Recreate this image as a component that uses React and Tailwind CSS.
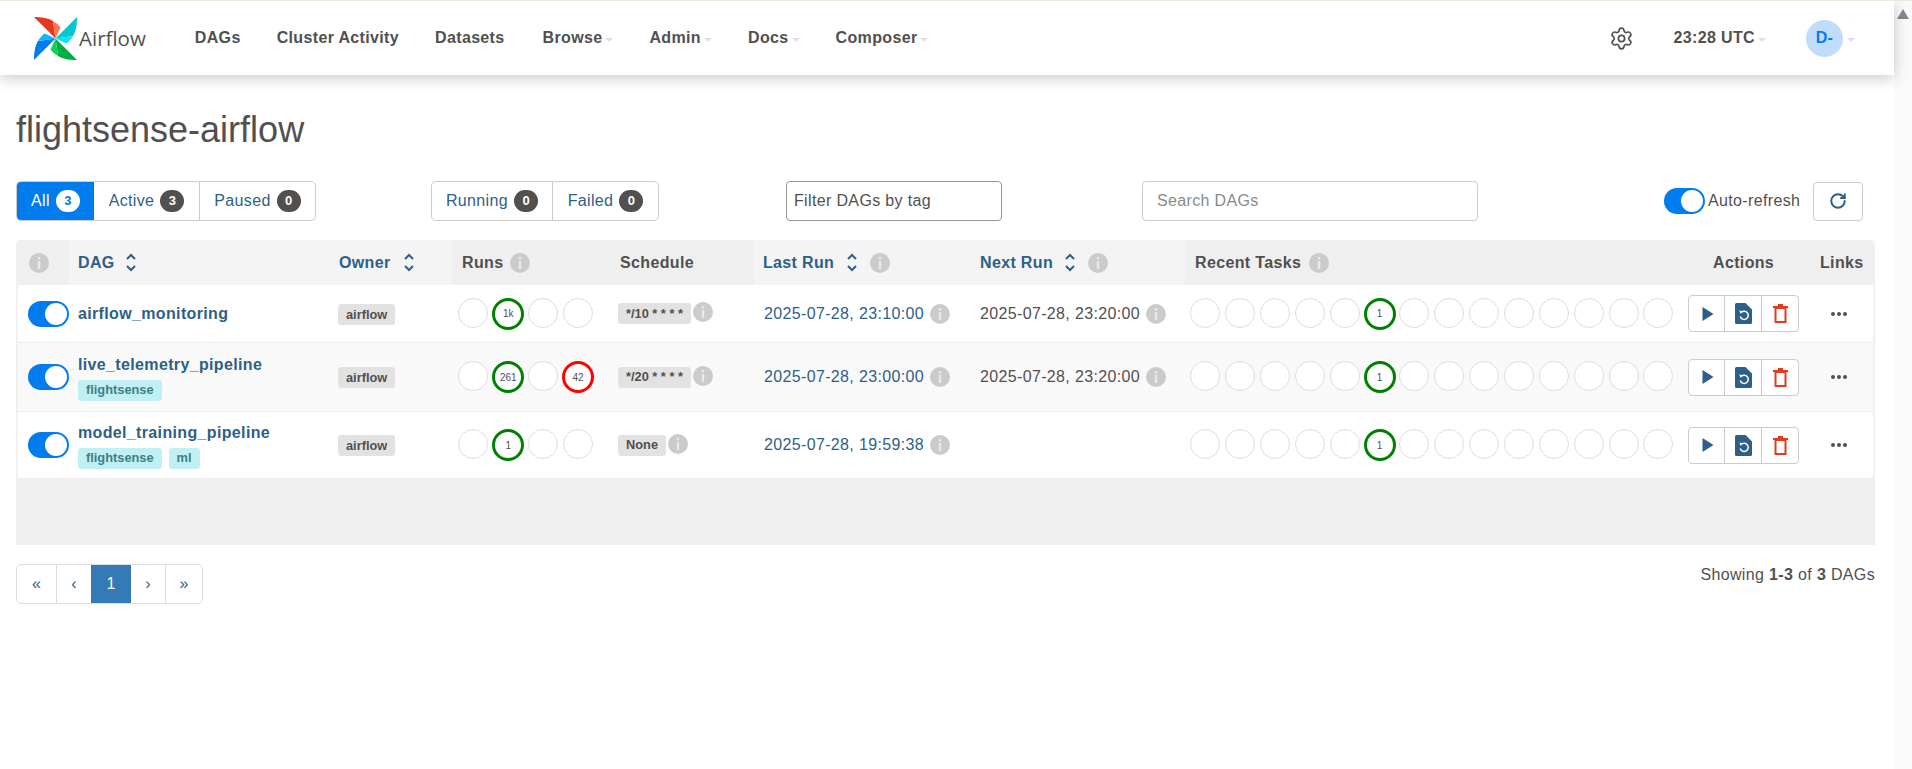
import { RotateCw, Settings } from 'lucide-react'

const LINK = 'text-[#2d5f88]'
const CELLS = 'grid grid-cols-[51px_261px_122px_158px_144px_216px_215px_495px_131px_62px]'

function Logo() {
  const blades = [
    ['#e43921', '#ff7557', 0],
    ['#00c7d4', '#11e1ee', 90],
    ['#00ad46', '#04d659', 180],
    ['#017cee', '#0cb6ff', 270],
  ]
  return (
    <svg width="43" height="43" viewBox="0 0 43 43">
      {blades.map(([dark, light, angle]) => (
        <g key={angle} transform={`rotate(${angle} 21.5 21.5)`}>
          <path d="M0 0C8 0 14 1 19 4L21.5 21.5Z" fill={dark} />
          <path d="M19 4C22 6 25 8 26.500 10.500L21.500 21.500Z" fill={light} />
        </g>
      ))}
    </svg>
  )
}

function Caret() {
  return <span className="ml-[3px] mt-[3px] inline-block h-0 w-0 border-x-4 border-t-4 border-x-transparent border-t-[#e6d9e8]" />
}

function NavItem({ label, caret, className = '' }) {
  return (
    <a className={`flex items-center px-[18px] ${className}`}>
      {label}
      {caret && <Caret />}
    </a>
  )
}

function Navbar() {
  return (
    <nav className="relative z-10 flex h-[74px] items-center bg-white pl-[34px] pr-[39px] font-bold text-[#51504f] shadow-[0_3px_14px_rgba(0,0,0,0.22)]">
      <div className="flex items-center">
        <Logo />
        <span className="ml-[2px] font-['Open_Sans'] text-[20.5px] font-normal tracking-normal">Airflow</span>
      </div>
      <div className="ml-[31px] flex items-center">
        <NavItem label="DAGs" />
        <NavItem label="Cluster Activity" />
        <NavItem label="Datasets" />
        <NavItem label="Browse" caret className="ml-[2px]" />
        <NavItem label="Admin" caret />
        <NavItem label="Docs" caret />
        <NavItem label="Composer" caret />
      </div>
      <div className="ml-auto flex items-center">
        <Settings size={25} strokeWidth={1.6} />
        <span className="ml-[40px] flex items-center">23:28 UTC<Caret /></span>
        <span className="ml-[40px] flex h-[37px] w-[37px] items-center justify-center rounded-full bg-[#bfdcfb] text-[#017cee]">D-</span>
        <span className="ml-[1px] flex"><Caret /></span>
      </div>
    </nav>
  )
}

function Badge({ value, active }) {
  return (
    <span className={`ml-[6px] flex h-[22px] w-[24px] items-center justify-center rounded-full text-[13px] font-bold tracking-normal ${active ? 'bg-white text-[#017cee]' : 'bg-[#51504f] text-white'}`}>
      {value}
    </span>
  )
}

function FilterButton({ label, value, active, className }) {
  return (
    <a className={`flex h-full items-center ${className} ${active ? 'bg-[#017cee] text-white' : LINK}`}>
      {label}
      <Badge value={value} active={active} />
    </a>
  )
}

function Toggle() {
  return (
    <span className="flex h-[26px] w-[41px] items-center justify-end rounded-full bg-[#017cee] pr-[2px]">
      <span className="h-[22px] w-[22px] rounded-full bg-white" />
    </span>
  )
}

function FilterBar() {
  return (
    <div className="mt-[28px] flex h-[40px] items-center">
      <div className="flex h-full w-[300px] overflow-hidden rounded-[5px] border border-[#ccc]">
        <FilterButton label="All" value="3" active className="w-[77px] justify-center" />
        <FilterButton label="Active" value="3" className="w-[106px] justify-center border-r border-[#ccc]" />
        <FilterButton label="Paused" value="0" className="flex-1 justify-center" />
      </div>
      <div className="ml-[115px] flex h-full w-[228px] overflow-hidden rounded-[5px] border border-[#ccc]">
        <FilterButton label="Running" value="0" className="w-[121px] justify-center border-r border-[#ccc]" />
        <FilterButton label="Failed" value="0" className="flex-1 justify-center" />
      </div>
      <div className="ml-[127px] flex h-full w-[216px] items-center rounded-[4px] border border-[#999] pl-[7px] text-[#51504f]">Filter DAGs by tag</div>
      <div className="ml-[140px] flex h-full w-[336px] items-center rounded-[4px] border border-[#ccc] pl-[14px] text-[#8a8a8a]">Search DAGs</div>
      <div className="ml-[186px]"><Toggle /></div>
      <span className="ml-[3px] text-[#51504f]">Auto-refresh</span>
      <button className={`ml-[13px] flex h-[39px] w-[50px] items-center justify-center rounded-[4px] border border-[#ccc] ${LINK}`}>
        <RotateCw size={18} strokeWidth={2.6} />
      </button>
    </div>
  )
}

function Info({ className = '' }) {
  return (
    <svg width="20" height="20" viewBox="0 0 20 20" className={`shrink-0 ${className}`}>
      <circle cx="10" cy="10" r="10" fill="#cbcbcb" />
      <rect x="8.8" y="4" width="2.400" height="2.400" fill="#e9e9e9" />
      <rect x="8.8" y="8" width="2.400" height="8" fill="#e9e9e9" />
    </svg>
  )
}

function Sort({ className = '' }) {
  return (
    <svg width="12" height="19" viewBox="0 0 12 19" className={`shrink-0 ${className}`} fill="none" stroke="#2d5f88" strokeWidth="2">
      <path d="M2 6l4-4 4 4" />
      <path d="M2 13l4 4 4-4" />
    </svg>
  )
}

function HeaderCell({ children, light, className = '' }) {
  return (
    <div className={`flex items-center ${light ? `bg-[#f4f4f4] ${LINK}` : 'bg-[#efefef] text-[#51504f]'} ${className}`}>
      {children}
    </div>
  )
}

function TableHeader() {
  return (
    <div className={`${CELLS} h-[45px] font-bold`}>
      <HeaderCell className="pl-[11px]"><Info /></HeaderCell>
      <HeaderCell light className="pl-[9px]">DAG<Sort className="ml-[10px]" /></HeaderCell>
      <HeaderCell light className="pl-[9px]">Owner<Sort className="ml-[12px]" /></HeaderCell>
      <HeaderCell className="pl-[10px]">Runs<Info className="ml-[7px]" /></HeaderCell>
      <HeaderCell className="pl-[10px]">Schedule</HeaderCell>
      <HeaderCell light className="pl-[9px]">Last Run<Sort className="ml-[12px]" /><Info className="ml-[12px]" /></HeaderCell>
      <HeaderCell light className="pl-[10px]">Next Run<Sort className="ml-[11px]" /><Info className="ml-[12px]" /></HeaderCell>
      <HeaderCell className="pl-[10px]">Recent Tasks<Info className="ml-[8px]" /></HeaderCell>
      <HeaderCell className="pl-[33px]">Actions</HeaderCell>
      <HeaderCell className="pl-[9px]">Links</HeaderCell>
    </div>
  )
}

function Circle({ value, color }) {
  return (
    <span className="flex w-[34.85px] shrink-0 justify-center">
      {value ? (
        <span className={`flex h-[32px] w-[32px] items-center justify-center rounded-full border-[3px] bg-white text-[10px] tracking-normal text-[#51504f] ${color}`}>{value}</span>
      ) : (
        <span className="h-[30px] w-[30px] rounded-full border-[1.5px] border-[#dedede] bg-white" />
      )}
    </span>
  )
}

function Label({ children, className = '' }) {
  return (
    <span className={`flex h-[21px] items-center rounded-[3px] px-[8px] text-[12.8px] font-bold tracking-normal ${className}`}>{children}</span>
  )
}

function Actions() {
  return (
    <div className="flex h-[37px] w-[111px] rounded-[4px] border border-[#ccc] bg-white">
      <span className="flex w-[36px] items-center justify-center border-r border-[#ccc] pl-[2px]">
        <svg width="12" height="14" viewBox="0 0 12 14"><path d="M0.500 0L11.500 7L0.500 14Z" fill="#2d5f88" /></svg>
      </span>
      <span className="flex w-[37px] items-center justify-center border-r border-[#ccc]">
        <svg width="17" height="21" viewBox="0 0 17 21">
          <path d="M1.500 0H10.500L17 6.500V19.500A1.500 1.500 0 0 1 15.500 21H1.500A1.500 1.500 0 0 1 0 19.500V1.500A1.500 1.500 0 0 1 1.500 0Z" fill="#2d5f88" />
          <path d="M6.400 9.300A4.100 4.100 0 1 1 5.200 13.500" fill="none" stroke="#fff" strokeWidth="1.500" />
          <path d="M4.300 7.600L7.800 8.200L5.700 11.100Z" fill="#fff" />
        </svg>
      </span>
      <span className="flex flex-1 items-center justify-center">
        <svg width="15" height="19" viewBox="0 0 15 19" fill="none" stroke="#e43921" strokeWidth="2">
          <path d="M0 3H15" />
          <path d="M5 1H10" />
          <rect x="2.500" y="4" width="10" height="14" />
        </svg>
      </span>
    </div>
  )
}

function DagRow({ name, tags, schedule, lastRun, nextRun, runs, height, striped }) {
  return (
    <div className={`${CELLS} ${height} items-center border-b border-[#eee] ${striped ? 'bg-[#f9f9f9]' : 'bg-white'}`}>
      <div className="pl-[10px]"><Toggle /></div>
      <div className="pl-[9px]">
        <a className={`block leading-[22px] font-bold ${LINK}`}>{name}</a>
        {tags && (
          <div className="mt-[4px] flex gap-[7px]">
            {tags.map((tag) => <Label key={tag} className="bg-[#c0f0f4] text-[#3f7f86]">{tag}</Label>)}
          </div>
        )}
      </div>
      <div className="pl-[8px]"><span className="inline-flex"><Label className="bg-[#e2e2e2] text-[#51504f]">airflow</Label></span></div>
      <div className="flex pl-[4px]">
        {runs.map((run, i) => <Circle key={i} value={run?.value} color={run?.color} />)}
      </div>
      <div className="flex items-center pl-[8px]">
        <Label className="bg-[#e2e2e2] text-[#51504f]">{schedule}</Label>
        <Info className="ml-[2px] -mt-[3px]" />
      </div>
      <div className={`flex items-center pl-[10px] ${LINK}`}>{lastRun}<Info className="ml-[6px]" /></div>
      <div className="flex items-center pl-[10px] text-[#51504f]">
        {nextRun}
        {nextRun && <Info className="ml-[6px]" />}
      </div>
      <div className="flex pl-[3px]">
        {Array.from({ length: 14 }, (_, i) => (
          <Circle key={i} value={i === 5 ? '1' : null} color="border-[#008000]" />
        ))}
      </div>
      <div className="pl-[8px]"><Actions /></div>
      <div className="flex justify-center gap-[2px] pr-[7px]">
        <span className="h-[4px] w-[4px] rounded-full bg-[#51504f]" />
        <span className="h-[4px] w-[4px] rounded-full bg-[#51504f]" />
        <span className="h-[4px] w-[4px] rounded-full bg-[#51504f]" />
      </div>
    </div>
  )
}

const GREEN = 'border-[#008000]'
const RED = 'border-[#ff0000]'

function DagTable() {
  return (
    <div className="mt-[19px] h-[305px] rounded-t-[4px] bg-[#f0f0f0] px-[2px]">
      <TableHeader />
      <DagRow
        name="airflow_monitoring"
        schedule="*/10 * * * *"
        lastRun="2025-07-28, 23:10:00"
        nextRun="2025-07-28, 23:20:00"
        runs={[null, { value: '1k', color: GREEN }, null, null]}
        height="h-[58px]"
      />
      <DagRow
        name="live_telemetry_pipeline"
        tags={['flightsense']}
        schedule="*/20 * * * *"
        lastRun="2025-07-28, 23:00:00"
        nextRun="2025-07-28, 23:20:00"
        runs={[null, { value: '261', color: GREEN }, null, { value: '42', color: RED }]}
        height="h-[69px]"
        striped
      />
      <DagRow
        name="model_training_pipeline"
        tags={['flightsense', 'ml']}
        schedule="None"
        lastRun="2025-07-28, 19:59:38"
        runs={[null, { value: '1', color: GREEN }, null, null]}
        height="h-[67px]"
      />
    </div>
  )
}

function Pagination() {
  const pages = [
    ['«', 'w-[40px] border-r border-[#ddd]'],
    ['‹', 'w-[34px]'],
    ['1', 'w-[40px] bg-[#337ab7] font-normal text-white'],
    ['›', 'w-[35px] border-r border-[#ddd]'],
    ['»', 'flex-1'],
  ]
  return (
    <div className="flex h-[40px] w-[187px] overflow-hidden rounded-[5px] border border-[#ddd]">
      {pages.map(([label, cls]) => (
        <a key={label} className={`flex items-center justify-center ${LINK} ${cls}`}>{label}</a>
      ))}
    </div>
  )
}

export default function App() {
  return (
    <div className="flex h-[769px] overflow-hidden border-t border-[#e4eddc] bg-white font-['Liberation_Sans',sans-serif] text-[16px] tracking-[0.35px] text-[#51504f]">
      <div className="min-w-0 flex-1">
        <Navbar />
        <main className="pl-[16px] pr-[19px]">
          <h1 className="mt-[32px] h-[46px] text-[36px] leading-[46px] tracking-normal">flightsense-airflow</h1>
          <FilterBar />
          <DagTable />
          <div className="mt-[19px] flex items-start justify-between">
            <Pagination />
            <p className="leading-[22px]">Showing <b>1-3</b> of <b>3</b> DAGs</p>
          </div>
        </main>
      </div>
      <div className="flex w-[18px] justify-center bg-[#fafafa] pt-[8px]">
        <span className="h-0 w-0 border-x-[6px] border-b-[10px] border-x-transparent border-b-[#888]" />
      </div>
    </div>
  )
}
